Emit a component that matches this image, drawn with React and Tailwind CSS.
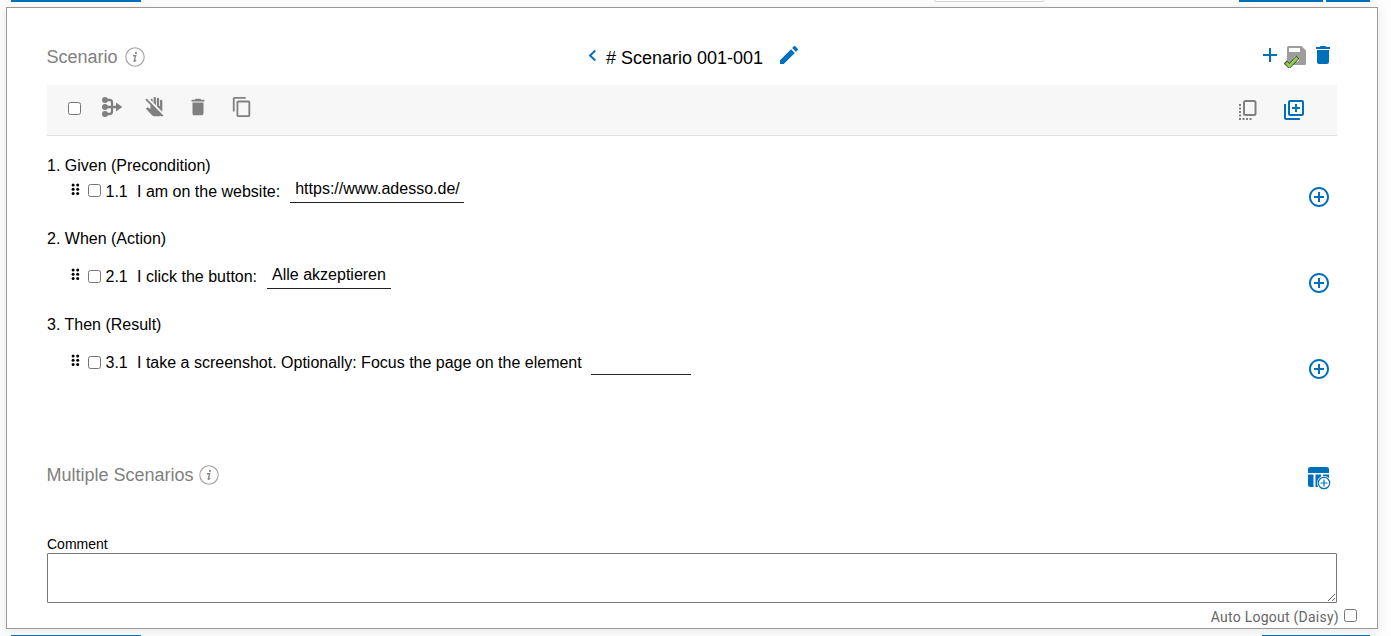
import React from "react";
import {
  MdAdd,
  MdAddCircleOutline,
  MdContentCopy,
  MdDelete,
  MdDoNotTouch,
  MdEdit,
  MdOutlineLibraryAdd,
} from "react-icons/md";

function Check({ className = "" }) {
  return (
    <input
      type="checkbox"
      className={"m-0 block h-[13px] w-[13px] shrink-0 appearance-none rounded-[2.5px] border border-[#767676] bg-white " + className}
    />
  );
}

function InfoIcon() {
  return (
    <svg width="20" height="20" viewBox="0 0 20 20" fill="none" className="shrink-0">
      <circle cx="10" cy="10" r="9.2" stroke="#a3a3a3" strokeWidth="1.1" />
      <circle cx="10.9" cy="5.9" r="1.1" fill="#8a8a8a" />
      <path d="M8 8.700h2.700L9.200 13.600q-.2.900.6.500l1.300-1.200M8.100 9" stroke="#8a8a8a" strokeWidth="1.350" />
    </svg>
  );
}

function MergeIcon() {
  return (
    <svg width="20" height="20" viewBox="0 0 20 20" fill="none" stroke="#808080" strokeWidth="2.300">
      <path d="M3 3h4.500q2.500 0 2.500 2.500v9q0 2.500-2.500 2.500H3M3 10h13" />
      <g fill="#808080" stroke="none">
        <circle cx="3" cy="3" r="3" />
        <circle cx="3" cy="10" r="3" />
        <circle cx="3" cy="17" r="3" />
        <path d="M14 5.600l6.200 4.400-6.200 4.400z" />
      </g>
    </svg>
  );
}

function CopyFrontIcon() {
  return (
    <svg width="24" height="24" viewBox="0 0 24 24" fill="none" stroke="#808080" className="ml-auto">
      <rect x="8" y="3" width="11.500" height="14" rx="1.500" strokeWidth="2" />
      <path d="M4 6v16" strokeWidth="2" strokeDasharray="2 1.500" />
      <path d="M6.500 21H17" strokeWidth="2" strokeDasharray="2 1.500" />
    </svg>
  );
}

function SavedIcon() {
  return (
    <svg width="23" height="23" viewBox="0 0 23 23">
      <path d="M4.500 1h13L22 5.500V18.500q0 1.500-1.500 1.500h-16Q3 20 3 18.500v-16Q3 1 4.500 1z" fill="#9f9c9c" />
      <path d="M5 3h11v4H5z" fill="#fff" />
      <circle cx="12.500" cy="14" r="2.800" fill="#fff" />
      <path d="M1.300 17l4 4L14 12" fill="none" stroke="#3d4a35" strokeWidth="4.300" />
      <path d="M2.100 17.800l3.200 3.100L13.300 12.700" fill="none" stroke="#92d050" strokeWidth="2.800" />
    </svg>
  );
}

function TableAddIcon() {
  return (
    <svg width="24" height="24" viewBox="0 0 24 24" fill="#0070ba">
      <path d="M3.500 1h16Q22 1 22 3V7H1V3Q1 1 3.500 1zM1 8.500h5.500V21H3q-2 0-2-2zM8.500 8.500h5.500V21H8.500zM16 8.500h6V14h-6z" />
      <circle cx="17" cy="17" r="7" fill="#fff" />
      <circle cx="17" cy="17" r="5.700" fill="#fff" stroke="#0070ba" strokeWidth="1.200" />
      <path d="M17 13.500v7M13.500 17h7" stroke="#0070ba" strokeWidth="1.200" />
    </svg>
  );
}

function DragIcon() {
  return (
    <svg width="9" height="13" viewBox="0 0 9 13" fill="#000" className="shrink-0">
      {[2, 6.3, 10.6].map((y) => (
        <g key={y}>
          <circle cx="2.100" cy={y} r="1.500" />
          <circle cx="6.700" cy={y} r="1.500" />
        </g>
      ))}
    </svg>
  );
}

function Step({ number, text, value, className, checkClass, fieldClass, plusClass }) {
  return (
    <div className={"flex items-start " + className}>
      <div className="flex h-6 items-center whitespace-pre pl-6">
        <div className="-mt-1.5"><DragIcon /></div>
        <Check className={"ml-2 " + checkClass} />
        <span className="ml-[4.500px] w-[31.500px]">{number}</span>
        <span>{text}</span>
      </div>
      <div className={"border-b border-[#222] px-[5px] " + fieldClass}>{value}</div>
      <MdAddCircleOutline size={24} className={"ml-auto mr-1.5 text-[#0070ba] " + plusClass} />
    </div>
  );
}

export default function App() {
  return (
    <div className="flex h-[636px] w-[1391px] flex-col overflow-hidden bg-[#fdfdfd] font-['Liberation_Sans',Arial,sans-serif] text-base leading-6 text-black">
      <div className="flex h-[7px] shrink-0 items-start pl-[11px]">
        <div className="h-[2px] w-[130px] bg-[#0070ba]" />
        <div className="ml-[793px] h-[2px] w-[110px] rounded-b-[3px] border border-t-0 border-[#d4d4d4] bg-white" />
        <div className="ml-[195px] h-[2px] w-[84px] bg-[#0070ba]" />
        <div className="ml-[3px] h-[2px] w-[44px] bg-[#0070ba]" />
      </div>

      <main className="ml-1.5 flex h-[622px] w-[1372px] shrink-0 flex-col border border-[#999] bg-white pl-10 pr-10 shadow-[0_2px_10px_rgba(0,0,0,0.09)]">
        <header className="flex h-[77px] shrink-0 items-center pt-[21px]">
          <div className="flex w-[540px] items-center text-lg text-[#808080]">
            <span className="w-[78px] -indent-[0.500px]">Scenario</span>
            <InfoIcon />
          </div>
          <svg width="10" height="13" viewBox="0 0 10 13" fill="none" className="-mt-1">
            <path d="M8.300 1.500L3 6.500l5.300 5" stroke="#0070ba" strokeWidth="1.900" />
          </svg>
          <h1 className="ml-[9px] w-[171px] whitespace-nowrap pt-0.5 text-lg">
            # Scenario 001-001
          </h1>
          <MdEdit size={24} className="-mt-1 text-[#0070ba]" />
          <div className="-mt-1 ml-auto flex items-center text-[#0070ba]">
            <MdAdd size={24} className="-mt-px" />
            <div className="ml-0.5 mt-0.5 h-[23px]"><SavedIcon /></div>
            <MdDelete size={24} className="ml-1 mr-0.5" />
          </div>
        </header>

        <div className="flex h-[51px] shrink-0 items-center border-b border-[#e0e0e0] bg-[#f7f7f7] pl-[21px] text-[#808080]">
          <Check className="-mt-1" />
          <div className="-mt-1.5 ml-[21px] flex items-center">
            <MergeIcon />
            <MdDoNotTouch size={22} className="ml-[22px]" />
            <MdDelete size={22} className="ml-[21px]" />
            <MdContentCopy size={22} className="ml-[22px]" />
          </div>
          <CopyFrontIcon />
          <MdOutlineLibraryAdd size={24} className="ml-[22px] mr-[31px] text-[#0070ba]" />
        </div>

        <section className="mt-[18px] h-[73px] shrink-0">
          <h2 className="-ml-px pl-px">1. Given (Precondition)</h2>
          <Step number="1.1" text="I am on the website:" value="https://www.adesso.de/" className="pt-0.5" checkClass="-mt-1" fieldClass="ml-[10px] -mt-[5px] h-7 w-[174px] pt-0.5" plusClass="mt-[5px]" />
        </section>
        <section className="h-[86px] shrink-0">
          <h2>2. When (Action)</h2>
          <Step number="2.1" text="I click the button:" value="Alle akzeptieren" className="pt-3.5" checkClass="-mt-0.5" fieldClass="ml-[10px] -mt-[5px] h-[29px] w-[124px] pt-[3px]" plusClass="mt-1.5" />
        </section>
        <section className="h-[137px] shrink-0">
          <h2>3. Then (Result)</h2>
          <Step number="3.1" text="I take a screenshot. Optionally: Focus the page on the element" className="pt-3.5" checkClass="-mt-0.5" fieldClass="ml-[9px] h-6 w-[100px]" plusClass="mt-1.5" />
        </section>

        <section className="flex h-[50px] shrink-0 items-center text-lg text-[#808080]">
          <span className="w-[152px] whitespace-nowrap -indent-[0.500px]">Multiple Scenarios</span>
          <InfoIcon />
          <div className="ml-auto mr-1.5 mt-1.5 h-6"><TableAddIcon /></div>
        </section>

        <label className="mt-[35px] h-[18px] shrink-0 text-sm leading-[18px]">Comment</label>
        <textarea className="block h-[50px] w-full shrink-0 resize rounded-[1px] border border-[#767676] bg-white" />
        <label className="-mr-5 flex h-[25px] items-center justify-end pt-[3px] font-[Roboto,sans-serif] text-sm tracking-[0.25px] text-[#666]">
          <span className="-mt-px">Auto Logout (Daisy)</span>
          <Check className="-mt-[3px] ml-[5px]" />
        </label>
      </main>

      <footer className="flex h-[7px] shrink-0 items-end justify-between pl-[11px] pr-[21px]">
        <div className="h-px w-[130px] bg-[#0070ba]" />
        <div className="h-px w-[108px] bg-[#0070ba]" />
      </footer>
    </div>
  );
}
